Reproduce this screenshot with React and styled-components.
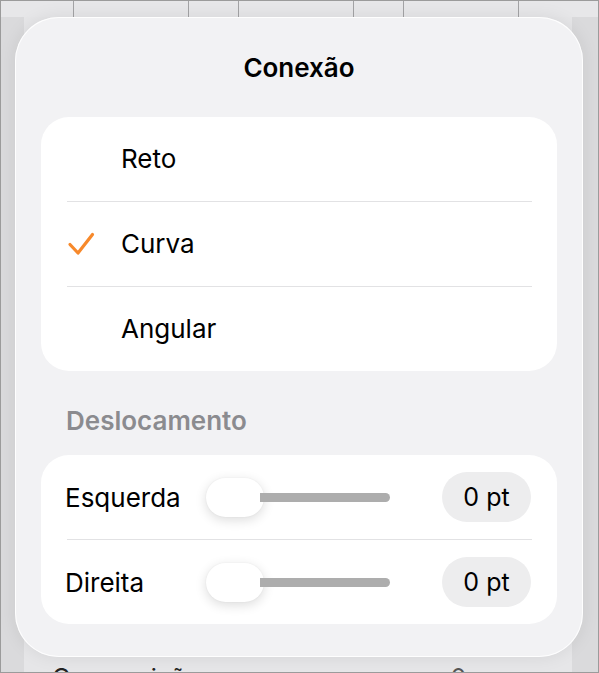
import React from 'react'
import styled, { createGlobalStyle } from 'styled-components'

const GlobalStyle = createGlobalStyle`
  html, body { margin: 0; padding: 0; background: #fff; }
  body { font-family: Inter, "Noto Sans", sans-serif; color: #000; -webkit-font-smoothing: antialiased; }
`

const Screen = styled.div`
  width: 599px;
  height: 673px;
  box-sizing: border-box;
  border: 1px solid #9b9b9b;
  overflow: hidden;
  display: flex;
  flex-direction: column;
  background: linear-gradient(to right, #dadadc 0 23px, #e6e6e8 23px 571px, #dadadc 571px);
`

const TopStrip = styled.div`
  height: 16px;
  flex: none;
  display: flex;
  background: #e7e7e9;
`

const Cell = styled.div`
  width: ${p => p.$w}px;
  flex: none;
  border-right: 1px solid #a3a3a5;
`

const Popover = styled.div`
  flex: none;
  height: 640px;
  margin: 0 15px 0 14px;
  box-sizing: border-box;
  padding: 0 26px;
  border-radius: 44px;
  background: #f2f2f4;
  box-shadow: 0 0 18px rgba(0, 0, 0, 0.08), inset 0 0 0 1px rgba(255, 255, 255, 0.9);
  display: flex;
  flex-direction: column;
`

const Title = styled.div`
  height: 100px;
  display: flex;
  align-items: center;
  justify-content: center;
  font-size: 26px;
  font-weight: 600;
`

const Card = styled.div`
  background: #fff;
  border-radius: 28px;
  display: flex;
  flex-direction: column;
`

const Divider = styled.div`
  height: 1px;
  margin: 0 25px 0 26px;
  background: #e2e2e4;
`

const OptionRow = styled.div`
  height: 84px;
  display: flex;
  align-items: center;
  font-size: 26px;
  padding-bottom: 1px;
  box-sizing: border-box;
`

const CheckSlot = styled.div`
  width: 80px;
  padding-left: 26px;
  box-sizing: border-box;
  display: flex;
  align-items: center;
`

const SectionLabel = styled.div`
  height: 84px;
  box-sizing: border-box;
  padding: 34px 0 0 25px;
  font-size: 26px;
  font-weight: 600;
  color: #8b8b8f;
`

const SliderRow = styled.div`
  height: 84px;
  display: grid;
  grid-template-columns: 141px 184px 1fr;
  align-items: center;
  padding: 0 26px 0 24px;
  font-size: 26px;
`

const Slider = styled.div`
  display: flex;
  align-items: center;
`

const Thumb = styled.div`
  width: 58px;
  height: 39px;
  flex: none;
  border-radius: 20px;
  background: #fff;
  box-shadow: 0 3px 12px rgba(0, 0, 0, 0.14), 0 0 2px rgba(0, 0, 0, 0.06);
`

const Track = styled.div`
  flex: 1;
  height: 9px;
  margin-left: -4px;
  border-radius: 0 5px 5px 0;
  background: #adadad;
`

const Pill = styled.div`
  justify-self: end;
  width: 89px;
  height: 50px;
  border-radius: 25px;
  background: #ededee;
  display: flex;
  align-items: center;
  justify-content: center;
  font-size: 25px;
`

const BottomRow = styled.div`
  flex: none;
  display: flex;
  align-items: flex-start;
  padding: 6px 0 0 51px;
  font-size: 25px;
  line-height: 30px;
  color: #222;
`

const BottomValue = styled.span`
  margin-left: auto;
  margin-right: 56px;
  display: flex;
  gap: 66px;
  color: #555;
`

const Check = () => (
  <svg width="28" height="24" viewBox="0 0 28 24" fill="none">
    <path d="M3 12.5 L11 21 L25.5 2.5" stroke="#f7892b" strokeWidth="3.2" strokeLinecap="round" strokeLinejoin="round" />
  </svg>
)

const options = [
  { label: 'Reto', checked: false },
  { label: 'Curva', checked: true },
  { label: 'Angular', checked: false },
]

const offsets = ['Esquerda', 'Direita']

export default function App() {
  return (
    <>
      <GlobalStyle />
      <Screen>
        <TopStrip>
          <Cell $w={72} />
          <Cell $w={114} />
          <Cell $w={49} />
          <Cell $w={114} />
          <Cell $w={49} />
          <Cell $w={114} />
        </TopStrip>
        <Popover>
          <Title>Conexão</Title>
          <Card>
            {options.map((o, i) => (
              <React.Fragment key={o.label}>
                {i > 0 && <Divider />}
                <OptionRow>
                  <CheckSlot>{o.checked && <Check />}</CheckSlot>
                  {o.label}
                </OptionRow>
              </React.Fragment>
            ))}
          </Card>
          <SectionLabel>Deslocamento</SectionLabel>
          <Card>
            {offsets.map((label, i) => (
              <React.Fragment key={label}>
                {i > 0 && <Divider />}
                <SliderRow>
                  <span>{label}</span>
                  <Slider>
                    <Thumb />
                    <Track />
                  </Slider>
                  <Pill>0 pt</Pill>
                </SliderRow>
              </React.Fragment>
            ))}
          </Card>
        </Popover>
        <BottomRow>
          <span>Composição</span>
          <BottomValue><span>0</span><span>›</span></BottomValue>
        </BottomRow>
      </Screen>
    </>
  )
}
